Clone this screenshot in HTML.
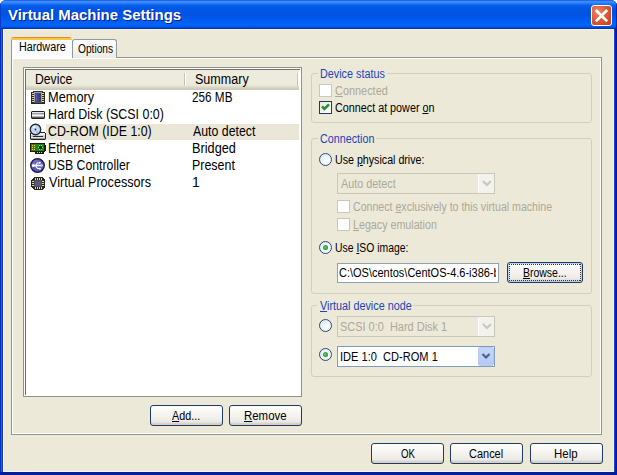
<!DOCTYPE html>
<html><head><meta charset="utf-8">
<style>
*{box-sizing:border-box;margin:0;padding:0}
html,body{width:617px;height:475px;overflow:hidden;background:#fff}
body{position:relative;font-family:"Liberation Sans",sans-serif;font-size:11px;color:#000}
.a{position:absolute}
.t{position:absolute;white-space:pre;line-height:14px}
#win{left:0;top:0;width:617px;height:475px;border-radius:6px 6px 0 0;background:#0831D9;overflow:hidden}
#title{left:0;top:0;width:617px;height:29px;
 background:linear-gradient(to bottom,#0A3FD0 0px,#3D8FFF 1px,#2F84FB 3px,#0A62EE 5px,#0057E6 8px,#0053DF 14px,#005CF0 20px,#0064FA 25px,#0058EA 27px,#0038BC 28px,#0034B0 29px)}
#lb{left:0;top:29px;width:3px;height:446px;background:linear-gradient(to right,#0030C8 0,#0030C8 1px,#2A5FE0 1px,#2A5FE0 2px,#1A3CA8 2px)}
#rb{left:614px;top:29px;width:3px;height:446px;background:linear-gradient(to right,#1E40C0 0,#1E40C0 1px,#0028B0 1px,#0028B0 2px,#001A90 2px)}
#bb{left:0;top:472px;width:617px;height:3px;background:#001EA0}
#client{left:3px;top:29px;width:611px;height:443px;background:#ECE9D8;border:1px solid #F4F6FA;border-width:1px 1px 1px 1px}
#close{left:591px;top:5px;width:21px;height:21px;border:1px solid #fff;border-radius:3px;
 background:radial-gradient(circle at 30% 30%,#EE8466 0,#DF5A36 45%,#C4401C 100%)}

#panel{left:11px;top:57px;width:591px;height:378px;border:1px solid #8E9690;background:#ECE9D8;box-shadow:inset 1px 1px 0 #fff,inset -1px -1px 0 #fff}
#tab1{left:11px;top:37px;width:61px;height:21px;background:#FCFCFE;border-left:1px solid #919B9C;border-radius:3px 3px 0 0}
#tab1o{left:11px;top:37px;width:61px;height:3px;border-radius:3px 3px 0 0;background:linear-gradient(#E68B2C 0,#E68B2C 1px,#FFC73C 1px,#FFC73C 3px)}
#tab2{left:72px;top:39px;width:45px;height:19px;border:1px solid #919B9C;border-bottom:none;border-left:1px solid #919B9C;border-radius:3px 3px 0 0;background:linear-gradient(#FFFFFF,#F3F3EF 60%,#ECEBE6)}
#lv{left:23px;top:67px;width:279px;height:330px;border:1px solid #8E928C;background:#fff;box-shadow:inset 1px 1px 0 #fff,inset -1px -1px 0 #fff}
#lvi{left:1px;top:1px;width:275px;height:326px;border-left:1px solid #716F64;border-top:1px solid #716F64}
#hdr{left:26px;top:70px;width:273px;height:20px;background:linear-gradient(#EEECDF 0,#EBEADB 15px,#E5E2D2 16px,#DEDACA 17px,#D5D1C1 18px,#CFCBBA 19px)}
.sep{width:2px;height:13px;top:73px;background:linear-gradient(to right,#C7C5B2 0,#C7C5B2 1px,#fff 1px)}
.lt{letter-spacing:0.5px;font-size:11px}
.gb{left:311px;width:281px;border:1px solid #D2CFBF;border-radius:3px}
.gt{color:#0046D5;background:#ECE9D8;padding:0 2px 0 2px}
.btn{border:1px solid #1F3A64;border-radius:3px;background:linear-gradient(#FFFFFF 0,#F6F5F1 40%,#ECEBE6 80%,#D6D0C5 100%);box-shadow:inset 0 -2px 0 rgba(214,208,197,.8)}
.btn span{position:absolute;left:0;right:0;text-align:center;white-space:pre;letter-spacing:-0.2px;line-height:13px}
.cb{width:13px;height:13px;border:1px solid #1F3A5C;background:linear-gradient(135deg,#E8E8E2,#FFFFFF)}
.cbd{width:13px;height:13px;border:1px solid #CAC8BB;background:#fff}
.rd{width:13px;height:13px;border:1px solid #2F4A6E;border-radius:50%;background:radial-gradient(circle at 60% 60%,#FFFFFF 0,#EEF5FF 40%,#D6E4F5 100%)}
.rdd{border-color:#5A6A80}
.dot{left:3px;top:3px;width:5px;height:5px;border-radius:50%;background:radial-gradient(circle at 45% 45%,#6CCB6C 0,#2C9E2C 60%,#1E7E1E 100%)}
.dis{color:#ACA899}
.u{text-decoration:underline}
</style></head>
<body>
<div id="win" class="a">
 <div id="title" class="a"></div>
 <div class="a" style="left:0;top:0;width:1px;height:29px;background:#0A3CCC"></div>
 <div class="a" style="left:616px;top:0;width:1px;height:29px;background:#0028A8"></div>
 <div id="lb" class="a"></div>
 <div id="rb" class="a"></div>
 <div id="bb" class="a"></div>
 <div id="client" class="a"></div>
 <div id="close" class="a">
  <svg width="19" height="19" style="position:absolute;left:0;top:0"><path d="M4.8 5 L14.2 14.4 M14.2 5 L4.8 14.4" stroke="#fff" stroke-width="2.7" stroke-linecap="square"/></svg>
 </div>

 <div id="panel" class="a"></div>
 <div id="tab2" class="a"></div>
 <div id="tab1" class="a"></div>
 <div id="tab1o" class="a"></div>

 <div id="lv" class="a"><div id="lvi" class="a"></div></div>
 <div id="hdr" class="a"></div>
 <div class="a sep" style="left:184px"></div>
 <div class="a sep" style="left:297px"></div>
 <div class="a" style="left:46px;top:124px;width:253px;height:16px;background:#EAE7D9"></div>

 <div class="a btn" style="left:150px;top:405px;width:73px;height:21px"></div>
 <div class="a btn" style="left:229px;top:405px;width:73px;height:21px"></div>

 <div class="a gb" style="top:73px;height:50px"></div>
 <div class="a" style="left:318px;top:70px;width:69px;height:6px;background:#ECE9D8"></div>
 <div class="a cbd" style="left:319px;top:84px"></div>
 <div class="a cb" style="left:319px;top:101px"><svg width="11" height="11" style="position:absolute;left:0;top:0"><path d="M2 4.4 L4.4 6.9 L9 2.3" stroke="#2A8F2A" stroke-width="2.5" fill="none"/></svg></div>

 <div class="a gb" style="top:138px;height:156px"></div>
 <div class="a" style="left:318px;top:135px;width:58px;height:6px;background:#ECE9D8"></div>
 <div class="a rd" style="left:319px;top:153px"></div>
 <div class="a" style="left:337px;top:173px;width:158px;height:21px;border:1px solid #C9C7BA;background:#ECE9D8"></div>
 <div class="a" style="left:478px;top:174px;width:16px;height:19px;background:#F3F3EE;border-left:1px solid #fff"><svg width="16" height="19" style="position:absolute;left:0;top:0"><path d="M4 7 L8 11 L12 7" stroke="#C9C7BA" stroke-width="2" fill="none"/></svg></div>
 <div class="a cbd" style="left:337px;top:200px"></div>
 <div class="a cbd" style="left:337px;top:218px"></div>
 <div class="a rd" style="left:319px;top:241px"><div class="a dot"></div></div>
 <div class="a" style="left:337px;top:263px;width:162px;height:20px;border:1px solid #8FA0B4;background:#fff"></div>
 <div class="a btn" style="left:507px;top:262px;width:76px;height:21px;box-shadow:inset 0 0 0 1px #B8D0F4"><div class="a" style="left:1px;top:1px;width:72px;height:17px;background:repeating-linear-gradient(to right,#333 0 1px,transparent 1px 2px) top/100% 1px no-repeat,repeating-linear-gradient(to right,#333 0 1px,transparent 1px 2px) bottom/100% 1px no-repeat,repeating-linear-gradient(to bottom,#333 0 1px,transparent 1px 2px) left/1px 100% no-repeat,repeating-linear-gradient(to bottom,#333 0 1px,transparent 1px 2px) right/1px 100% no-repeat"></div></div>

 <div class="a gb" style="top:305px;height:72px"></div>
 <div class="a" style="left:317px;top:302px;width:96px;height:6px;background:#ECE9D8"></div>
 <div class="a rd" style="left:319px;top:319px"></div>
 <div class="a" style="left:337px;top:316px;width:158px;height:21px;border:1px solid #C9C7BA;background:#ECE9D8"></div>
 <div class="a" style="left:478px;top:317px;width:16px;height:19px;background:#F3F3EE;border-left:1px solid #fff"><svg width="16" height="19" style="position:absolute;left:0;top:0"><path d="M4 7 L8 11 L12 7" stroke="#C9C7BA" stroke-width="2" fill="none"/></svg></div>
 <div class="a rd" style="left:319px;top:348px"><div class="a dot"></div></div>
 <div class="a" style="left:337px;top:346px;width:158px;height:21px;border:1px solid #7F9DB9;background:#fff"></div>
 <div class="a" style="left:478px;top:347px;width:16px;height:19px;border-radius:2px;background:linear-gradient(#C6D5FB,#B5C9F7);border:1px solid #B9CBF3"><svg width="14" height="17" style="position:absolute;left:0;top:0"><path d="M3.5 6 L7 9.5 L10.5 6" stroke="#4D6185" stroke-width="2.2" fill="none"/></svg></div>

 <div class="a btn" style="left:371px;top:443px;width:73px;height:21px"></div>
 <div class="a btn" style="left:450px;top:443px;width:73px;height:21px"></div>
 <div class="a btn" style="left:530px;top:443px;width:73px;height:21px"></div>
 <svg class="a" style="left:29px;top:89px" width="18" height="103" shape-rendering="crispEdges">
  <!-- memory: origin (2,2) -->
  <g transform="translate(2,2)">
   <rect x="2" y="0" width="10" height="1" fill="#3A3420"/>
   <rect x="0" y="1" width="14" height="12" rx="1" fill="#2E2A18"/>
   <rect x="1" y="2" width="2" height="1" fill="#EAD99A"/><rect x="1" y="4" width="2" height="1" fill="#EAD99A"/><rect x="1" y="6" width="2" height="1" fill="#EAD99A"/><rect x="1" y="8" width="2" height="1" fill="#EAD99A"/><rect x="1" y="10" width="2" height="1" fill="#EAD99A"/>
   <rect x="11" y="2" width="2" height="1" fill="#EAD99A"/><rect x="11" y="4" width="2" height="1" fill="#EAD99A"/><rect x="11" y="6" width="2" height="1" fill="#EAD99A"/><rect x="11" y="8" width="2" height="1" fill="#EAD99A"/><rect x="11" y="10" width="2" height="1" fill="#EAD99A"/>
   <rect x="3" y="1" width="8" height="11" fill="#9A9CC0"/>
   <rect x="4" y="2" width="6" height="9" fill="#434A80"/>
   <rect x="5" y="3" width="1" height="7" fill="#5A609A"/><rect x="8" y="2" width="2" height="9" fill="#353B6A"/><rect x="3" y="11" width="8" height="1" fill="#50507A"/>
  </g>
  <!-- hard disk: origin (2,22) -->
  <g transform="translate(2,22)">
   <rect x="1" y="0" width="12" height="8" fill="#222"/>
   <rect x="0" y="1" width="14" height="6" fill="#222"/>
   <rect x="0" y="0" width="1" height="1" fill="#9A9A9A"/><rect x="13" y="0" width="1" height="1" fill="#9A9A9A"/><rect x="0" y="7" width="1" height="1" fill="#9A9A9A"/><rect x="13" y="7" width="1" height="1" fill="#9A9A9A"/>
   <rect x="1" y="1" width="12" height="1" fill="#E6E6E6"/>
   <rect x="1" y="2" width="12" height="1" fill="#A0A0A0"/>
   <rect x="10" y="2" width="2" height="1" fill="#6E9E6E"/>
   <rect x="1" y="3" width="12" height="1" fill="#D0D0D0"/>
   <rect x="1" y="4" width="12" height="1" fill="#F6F6F6"/>
   <rect x="1" y="5" width="12" height="1" fill="#B4B4B4"/>
   <rect x="1" y="6" width="12" height="1" fill="#5E5E5E"/>
  </g>
  <!-- cdrom: origin (1,35) -->
  <g transform="translate(1,35)">
   <rect x="1" y="8" width="14" height="8" fill="#222"/>
   <rect x="0" y="9" width="16" height="6" fill="#222"/>
   <rect x="0" y="15" width="1" height="1" fill="#9A9A9A"/><rect x="15" y="15" width="1" height="1" fill="#9A9A9A"/>
   <rect x="1" y="9" width="14" height="2" fill="#F2F2F2"/>
   <rect x="1" y="11" width="14" height="1" fill="#D6D6D6"/>
   <rect x="1" y="12" width="14" height="1" fill="#C4C4C4"/>
   <rect x="3" y="12" width="10" height="1" fill="#2A2A2A"/>
   <rect x="1" y="13" width="14" height="1" fill="#E0E0E0"/>
   <rect x="1" y="14" width="14" height="1" fill="#9C9C9C"/>
   <circle cx="5.5" cy="5.5" r="5.2" fill="#C6DAF2" stroke="#222C36" stroke-width="1.4" shape-rendering="auto"/>
   <circle cx="5.5" cy="5.5" r="0.9" fill="#1F2F5F" shape-rendering="auto"/>
   <rect x="3" y="2" width="2" height="2" fill="#EEF5FD"/>
   <rect x="6" y="7" width="2" height="2" fill="#A3BFE6"/>
  </g>
  <!-- ethernet: origin (1,54) -->
  <g transform="translate(1,54)">
   <rect x="0" y="0" width="15" height="9" fill="#15200A"/>
   <rect x="15" y="2" width="1" height="6" fill="#15200A"/>
   <rect x="5" y="9" width="9" height="2" fill="#15200A"/>
   <rect x="1" y="1" width="13" height="7" fill="#1C8420"/>
   <rect x="1" y="1" width="5" height="7" fill="#5E6A12"/>
   <rect x="2" y="2" width="1" height="1" fill="#D8D850"/><rect x="4" y="2" width="1" height="1" fill="#D8D850"/>
   <rect x="2" y="4" width="1" height="1" fill="#D8D850"/><rect x="4" y="4" width="1" height="1" fill="#D8D850"/>
   <rect x="2" y="6" width="1" height="1" fill="#D8D850"/><rect x="4" y="6" width="1" height="1" fill="#D8D850"/>
   <rect x="9" y="2" width="1" height="1" fill="#98E060"/><rect x="11" y="2" width="1" height="1" fill="#98E060"/>
   <rect x="8" y="4" width="1" height="1" fill="#98E060"/><rect x="12" y="4" width="1" height="1" fill="#98E060"/>
   <rect x="9" y="6" width="1" height="1" fill="#98E060"/><rect x="11" y="6" width="1" height="1" fill="#98E060"/>
   <rect x="9" y="3" width="3" height="3" fill="#0E2A0E"/>
   <rect x="7" y="9" width="1" height="1" fill="#B8E880"/><rect x="9" y="9" width="1" height="1" fill="#B8E880"/><rect x="11" y="9" width="1" height="1" fill="#B8E880"/>
  </g>
  <!-- usb: origin (1,69) -->
  <g transform="translate(1,69)" shape-rendering="auto">
   <circle cx="7.5" cy="7.5" r="6.8" fill="#5A5ABE" stroke="#18183A" stroke-width="1.3"/>
   <circle cx="6.5" cy="6" r="4" fill="#7A7AD8" opacity=".6"/>
   <circle cx="3.3" cy="7.5" r="1.5" fill="#fff"/>
   <path d="M3.5 7.5 H11" stroke="#fff" stroke-width="1.3"/>
   <path d="M11.5 5.6 L13 7.5 L11.5 9.4 Z" fill="#fff"/>
   <path d="M5.5 7.5 L7.5 5 H9" stroke="#fff" stroke-width="1.1" fill="none"/>
   <path d="M5.5 7.5 L7.5 10.5 H9.5" stroke="#fff" stroke-width="1.1" fill="none"/>
   <rect x="9" y="4" width="1.6" height="1.6" fill="#fff"/>
   <rect x="9" y="9.8" width="1.8" height="1.8" fill="#fff"/>
  </g>
  <!-- processor: origin (2,88) -->
  <g transform="translate(2,88)">
   <path d="M3 0 H11 L14 3 V10 L11 13 H3 L0 10 V3 Z" fill="#2A2616"/>
   <rect x="4" y="1" width="1" height="2" fill="#EAD99A"/><rect x="6" y="1" width="1" height="2" fill="#EAD99A"/><rect x="8" y="1" width="1" height="2" fill="#EAD99A"/><rect x="10" y="1" width="1" height="2" fill="#EAD99A"/>
   <rect x="4" y="10" width="1" height="2" fill="#EAD99A"/><rect x="6" y="10" width="1" height="2" fill="#EAD99A"/><rect x="8" y="10" width="1" height="2" fill="#EAD99A"/><rect x="10" y="10" width="1" height="2" fill="#EAD99A"/>
   <rect x="1" y="4" width="2" height="1" fill="#EAD99A"/><rect x="1" y="6" width="2" height="1" fill="#EAD99A"/><rect x="1" y="8" width="2" height="1" fill="#EAD99A"/>
   <rect x="11" y="4" width="2" height="1" fill="#EAD99A"/><rect x="11" y="6" width="2" height="1" fill="#EAD99A"/><rect x="11" y="8" width="2" height="1" fill="#EAD99A"/>
   <rect x="3" y="3" width="8" height="7" fill="#4A4668"/>
   <rect x="4" y="4" width="6" height="5" fill="#5C5882"/>
  </g>
 </svg>

 <div id="ttl" class="t" style="left:8px;top:8px;font-size:14px;letter-spacing:0.000px;transform:scaleX(1.0660);transform-origin:0 0;color:#fff;font-weight:bold;text-shadow:1px 1px 0 #0A1E8C">Virtual Machine Settings</div>
 <div id="hw" class="t" style="left:19px;top:40px;font-size:12px;letter-spacing:0.000px;transform:scaleX(0.8980);transform-origin:0 0;">Hardware</div>
 <div id="op" class="t" style="left:78px;top:42px;font-size:12px;letter-spacing:0.000px;transform:scaleX(0.8469);transform-origin:0 0;">Options</div>
 <div id="dev" class="t" style="left:35px;top:72px;font-size:14px;letter-spacing:0.000px;transform:scaleX(0.8712);transform-origin:0 0;">Device</div>
 <div id="sum" class="t" style="left:195px;top:72px;font-size:14px;letter-spacing:0.000px;transform:scaleX(0.8958);transform-origin:0 0;">Summary</div>
 <div id="mem" class="t" style="left:48px;top:90px;font-size:14px;letter-spacing:0.000px;transform:scaleX(0.9154);transform-origin:0 0;">Memory</div>
 <div id="256" class="t" style="left:192px;top:90px;font-size:14px;letter-spacing:0.000px;transform:scaleX(0.8386);transform-origin:0 0;">256 MB</div>
 <div id="hd" class="t" style="left:48px;top:107px;font-size:14px;letter-spacing:0.000px;transform:scaleX(0.8868);transform-origin:0 0;">Hard Disk (SCSI 0:0)</div>
 <div id="cd" class="t" style="left:48px;top:124px;font-size:14px;letter-spacing:0.000px;transform:scaleX(0.8829);transform-origin:0 0;">CD-ROM (IDE 1:0)</div>
 <div id="ad" class="t" style="left:193px;top:124px;font-size:14px;letter-spacing:0.000px;transform:scaleX(0.8807);transform-origin:0 0;">Auto detect</div>
 <div id="eth" class="t" style="left:48px;top:141px;font-size:14px;letter-spacing:0.000px;transform:scaleX(0.8782);transform-origin:0 0;">Ethernet</div>
 <div id="br" class="t" style="left:192px;top:141px;font-size:14px;letter-spacing:0.000px;transform:scaleX(0.9096);transform-origin:0 0;">Bridged</div>
 <div id="usb" class="t" style="left:48px;top:158px;font-size:14px;letter-spacing:0.000px;transform:scaleX(0.8759);transform-origin:0 0;">USB Controller</div>
 <div id="pr" class="t" style="left:192px;top:158px;font-size:14px;letter-spacing:0.000px;transform:scaleX(0.8885);transform-origin:0 0;">Present</div>
 <div id="vp" class="t" style="left:49px;top:175px;font-size:14px;letter-spacing:0.000px;transform:scaleX(0.8999);transform-origin:0 0;">Virtual Processors</div>
 <div id="one" class="t" style="left:192px;top:175px;font-size:14px;letter-spacing:0.000px;transform:scaleX(1.0000);transform-origin:0 0;">1</div>
 <div id="add" class="t" style="left:172px;top:409px;font-size:12px;letter-spacing:0.000px;transform:scaleX(0.8966);transform-origin:0 0;"><u>A</u>dd...</div>
 <div id="rem" class="t" style="left:244px;top:409px;font-size:12px;letter-spacing:0.000px;transform:scaleX(0.9524);transform-origin:0 0;"><u>R</u>emove</div>
 <div id="ok" class="t" style="left:401px;top:447px;font-size:12px;letter-spacing:0.000px;transform:scaleX(0.8048);transform-origin:0 0;">OK</div>
 <div id="can" class="t" style="left:469px;top:447px;font-size:12px;letter-spacing:0.000px;transform:scaleX(0.9143);transform-origin:0 0;">Cancel</div>
 <div id="help" class="t" style="left:554px;top:447px;font-size:12px;letter-spacing:0.000px;transform:scaleX(0.9545);transform-origin:0 0;">Help</div>
 <div id="ds" class="t" style="left:320px;top:67px;font-size:12px;letter-spacing:0.000px;transform:scaleX(0.9000);transform-origin:0 0;color:#1D44B8">Device status</div>
 <div id="cnd" class="t" style="left:335px;top:84px;font-size:12px;letter-spacing:0.000px;transform:scaleX(0.9091);transform-origin:0 0;color:#ACA899"><u>C</u>onnected</div>
 <div id="cap" class="t" style="left:335px;top:101px;font-size:12px;letter-spacing:0.000px;transform:scaleX(0.8981);transform-origin:0 0;">Connect at power <u>o</u>n</div>
 <div id="cn" class="t" style="left:320px;top:132px;font-size:12px;letter-spacing:0.000px;transform:scaleX(0.8966);transform-origin:0 0;color:#1D44B8">Connection</div>
 <div id="upd" class="t" style="left:335px;top:153px;font-size:12px;letter-spacing:0.000px;transform:scaleX(0.8878);transform-origin:0 0;">Use <u>p</u>hysical drive:</div>
 <div id="adc" class="t" style="left:341px;top:177px;font-size:12px;letter-spacing:0.000px;transform:scaleX(0.9000);transform-origin:0 0;color:#ACA899">Auto detect</div>
 <div id="cex" class="t" style="left:353px;top:200px;font-size:12px;letter-spacing:0.000px;transform:scaleX(0.8834);transform-origin:0 0;color:#ACA899">Connect <u>e</u>xclusively to this virtual machine</div>
 <div id="leg" class="t" style="left:353px;top:218px;font-size:12px;letter-spacing:0.000px;transform:scaleX(0.8914);transform-origin:0 0;color:#ACA899"><u>L</u>egacy emulation</div>
 <div id="uiso" class="t" style="left:335px;top:241px;font-size:12px;letter-spacing:0.000px;transform:scaleX(0.8659);transform-origin:0 0;">Use <u>I</u>SO image:</div>
 <div id="vdn" class="t" style="left:320px;top:299px;font-size:12px;letter-spacing:0.000px;transform:scaleX(0.9000);transform-origin:0 0;color:#1D44B8"><u>V</u>irtual device node</div>
 <div id="scsi" class="t" style="left:340px;top:320px;font-size:12px;letter-spacing:0.000px;transform:scaleX(0.9130);transform-origin:0 0;color:#ACA899">SCSI 0:0  Hard Disk 1</div>
 <div id="ide" class="t" style="left:340px;top:350px;font-size:12px;letter-spacing:0.000px;transform:scaleX(0.9223);transform-origin:0 0;">IDE 1:0  CD-ROM 1</div>
 <div class="a" style="left:338px;top:264px;width:158px;height:18px;overflow:hidden"><div id="path" class="t" style="left:339px;top:266px;font-size:12px;letter-spacing:0.000px;transform:scaleX(0.9157);transform-origin:0 0;;margin-left:-338px;margin-top:-264px">C:\OS\centos\CentOS-4.6-i386-bin</div></div>
 <div id="brw" class="t" style="left:523px;top:266px;font-size:12px;letter-spacing:0.000px;transform:scaleX(0.8723);transform-origin:0 0;"><u>B</u>rowse...</div>
</div>
</body></html>
